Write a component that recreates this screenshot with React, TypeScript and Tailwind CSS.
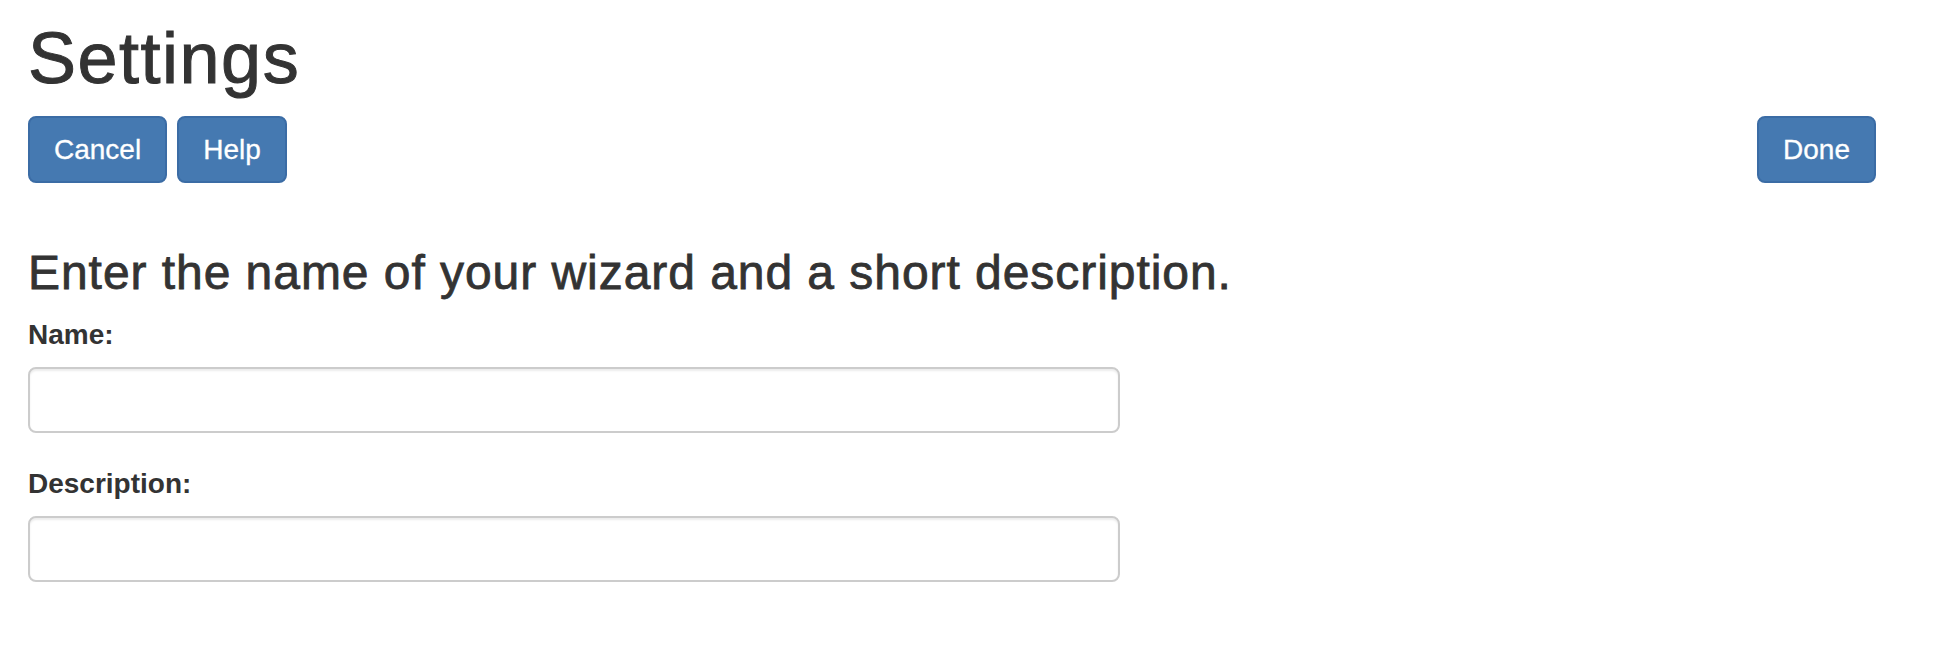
export default function App() {
  return (
    <main className="min-h-screen bg-white pl-[28px] pr-[80px] pt-[19px] font-['Liberation_Sans',Arial,sans-serif] text-[#333]">
      {/* title */}
      <h1 className="text-[72px] leading-[79px] tracking-[1.5px] [-webkit-text-stroke:1px_#333]">Settings</h1>

      {/* toolbar */}
      <div className="mt-[18px] flex items-center justify-between">
        <div className="flex gap-[10px]">
          <button className="h-[67px] rounded-[8px] border-2 border-[#3b6ca5] bg-[#4579b1] px-[24px] text-[28px] text-white [-webkit-text-stroke:0.3px_#fff]">
            Cancel
          </button>
          <button className="h-[67px] rounded-[8px] border-2 border-[#3b6ca5] bg-[#4579b1] px-[24px] text-[28px] text-white [-webkit-text-stroke:0.3px_#fff]">
            Help
          </button>
        </div>
        <button className="h-[67px] rounded-[8px] border-2 border-[#3b6ca5] bg-[#4579b1] px-[24px] text-[28px] text-white [-webkit-text-stroke:0.3px_#fff]">
          Done
        </button>
      </div>

      {/* form */}
      <h3 className="mt-[63px] text-[48px] leading-[53px] tracking-[0.95px] [-webkit-text-stroke:0.8px_#333]">
        Enter the name of your wizard and a short description.
      </h3>

      <label className="mt-[16px] block text-[28px] font-bold leading-[40px]">Name:</label>
      <input
        type="text"
        className="mt-[12px] block h-[66px] w-[1092px] rounded-[8px] border-2 border-[#ccc] px-[24px] text-[28px] shadow-[inset_0_2px_2px_rgba(0,0,0,0.075)] outline-none"
      />

      <label className="mt-[31px] block text-[28px] font-bold leading-[40px]">Description:</label>
      <input
        type="text"
        className="mt-[12px] block h-[66px] w-[1092px] rounded-[8px] border-2 border-[#ccc] px-[24px] text-[28px] shadow-[inset_0_2px_2px_rgba(0,0,0,0.075)] outline-none"
      />
    </main>
  );
}
